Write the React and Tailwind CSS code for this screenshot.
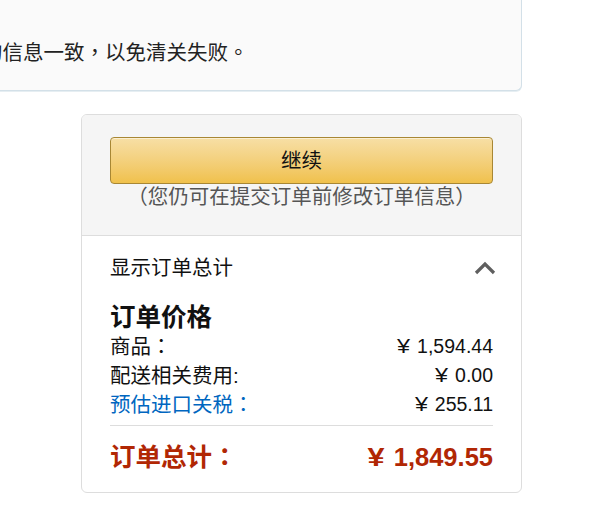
import React from "react";

const font = { fontFamily: '"Liberation Sans", "Noto Sans CJK SC", sans-serif' };
// centred full-width punctuation, as the reference font draws it
const punct = { fontFamily: '"Noto Sans CJK TC", sans-serif' };

const P = ({ children }) => (
  <span style={punct} className="inline-block w-[1em] text-center leading-none">
    {children}
  </span>
);

const Yen = ({ children }) => (
  <span>
    <span className="inline-block scale-x-[1.2] mr-[3px]">¥</span> {children}
  </span>
);

const PriceRow = ({ label, colon, value, link }) => (
  <div className="flex justify-between items-center h-[29px] leading-[29px]">
    <span className={link ? "text-[#0066c0]" : "text-[#111]"}>
      {label}
      {colon}
    </span>
    <span className="text-[#111] text-[19.5px]">
      <Yen>{value}</Yen>
    </span>
  </div>
);

const App = () => {
  return (
    <div
      className="w-[600px] h-[513px] bg-white overflow-hidden text-[20.5px] text-[#111]"
      style={font}
    >
      {/* notice box, cut off at the top left */}
      <div className="w-[522px] h-[91px] bg-[#fafafa] border-b border-r border-[#d3e0e8] rounded-br-[6px] shadow-[0_1px_0_#e6eef2] pt-[38px] overflow-hidden">
        <p className="h-[29px] leading-[29px] -ml-[18px] whitespace-nowrap text-[#222]">
          的信息一致<P>，</P>以免清关失败<P>。</P>
        </p>
      </div>

      {/* order summary card */}
      <div className="mt-[23px] ml-[81px] w-[441px] h-[379px] border border-[#dddddd] rounded-[6px] overflow-hidden">
        <div className="bg-[#f5f5f5] border-b border-[#dddddd] px-[28px] pt-[22px] pb-[25px]">
          <button className="w-full h-[47px] rounded-[4px] border border-[#a88734] bg-gradient-to-b from-[#f7dfa5] to-[#f0c14b] shadow-[inset_0_1px_0_rgba(255,255,255,0.5)] text-[#111] leading-[45px]">
            继续
          </button>
          <p className="h-[26px] text-center leading-[26px] text-[#555] whitespace-nowrap">
            <P>（</P>您仍可在提交订单前修改订单信息<P>）</P>
          </p>
        </div>

        <div className="bg-white px-[28px] pt-[17px]">
          <div className="flex justify-between items-center h-[29px] leading-[29px]">
            <span>显示订单总计</span>
            <svg
              width="22"
              height="14"
              viewBox="0 0 22 14"
              className="-mr-[3px]"
              fill="none"
              stroke="#5f5f5f"
              strokeWidth="3.2"
            >
              <path d="M2 12 L11 3 L20 12" />
            </svg>
          </div>

          <h3 className="mt-[19px] text-[25.5px] font-bold leading-[32px]">订单价格</h3>

          <div className="-mt-[1px]">
            <PriceRow label="商品" colon={<P>：</P>} value="1,594.44" />
            <PriceRow label="配送相关费用:" value="0.00" />
            <PriceRow label="预估进口关税" colon={<P>：</P>} value="255.11" link />
          </div>

          <div className="mt-[6px] border-t border-[#dddddd]" />

          <div className="mt-[15px] flex justify-between items-center h-[32px] leading-[32px] text-[25.5px] font-bold text-[#b12704]">
            <span>
              订单总计<P>：</P>
            </span>
            <Yen>1,849.55</Yen>
          </div>
        </div>
      </div>
    </div>
  );
};

export default App;
